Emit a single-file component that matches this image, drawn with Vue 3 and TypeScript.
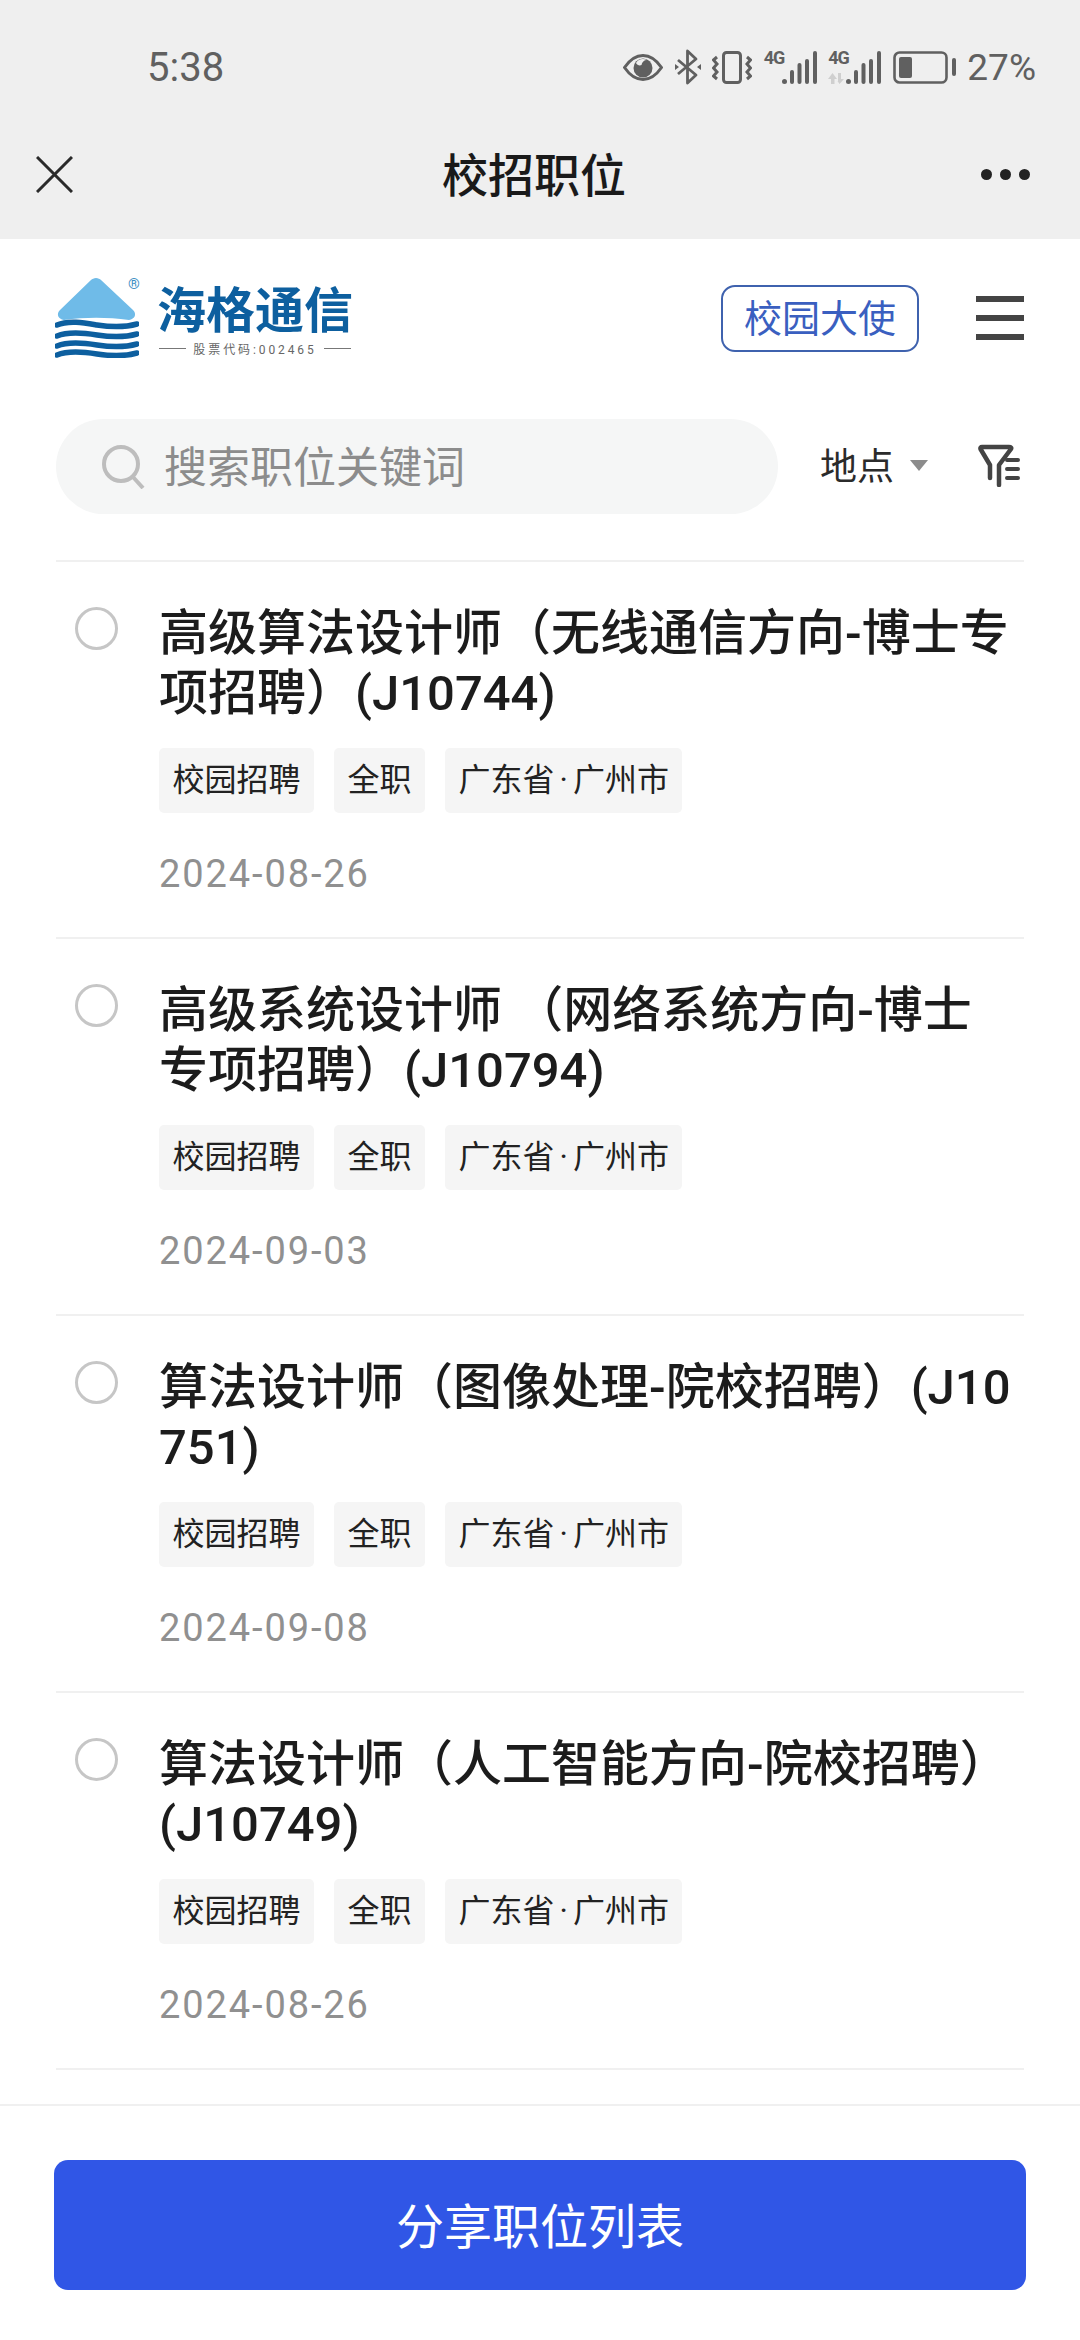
<template>
  <div class="page">
    <div class="top-bar">
      <div class="status-bar">
        <span class="clock">5:38</span>
        <div class="status-icons">
          <svg width="40" height="27" viewBox="0 0 40 27">
            <path d="M1.5 13.5 C8 4 14 1.5 20 1.5 C26 1.5 32 4 38.5 13.5 C32 23 26 25.5 20 25.5 C14 25.5 8 23 1.5 13.5 Z" fill="none" stroke="#606060" stroke-width="3" />
            <circle cx="20" cy="14" r="9.5" fill="#606060" />
            <path d="M13 9 C15 5 20 4 24 6 C21 6 19 8 18.5 11 C16.5 12 14 11 13 9 Z" fill="#efefef" />
          </svg>
          <svg width="26" height="36" viewBox="0 0 26 36">
            <path d="M3 11 L21 26 L12.5 34 L12.5 2 L21 10 L3 25" fill="none" stroke="#606060" stroke-width="2.8" stroke-linejoin="round" />
            <path d="M0 15 L4 18 L0 21 Z M26 15 L22 18 L26 21 Z" fill="#606060" />
          </svg>
          <svg width="40" height="33" viewBox="0 0 40 33">
            <rect x="11.5" y="1.5" width="17" height="30" rx="3" fill="none" stroke="#606060" stroke-width="3" />
            <path d="M5 6 L1.5 9 L5 13 L1.5 17 L5 21 L1.5 25 L5 28" fill="none" stroke="#606060" stroke-width="3" />
            <path d="M35 6 L38.5 9 L35 13 L38.5 17 L35 21 L38.5 25 L35 28" fill="none" stroke="#606060" stroke-width="3" />
          </svg>
          <div v-for="n in 2" :key="n" class="signal">
            <span class="net">4G</span>
            <svg v-if="n === 2" class="arrows" width="16" height="11" viewBox="0 0 16 11">
              <path d="M4.5 0 L9 6 H6.5 V11 H3 V6 H0 Z M10 0 H13 V6 H16 L11.5 11 L9.5 8 H10 Z" fill="#cfcfcf" />
            </svg>
            <svg width="35" height="33" viewBox="0 0 35 33">
              <circle cx="2.5" cy="30.5" r="2.5" fill="#606060" />
              <rect x="8" y="19" width="4" height="14" rx="2" fill="#606060" />
              <rect x="15.5" y="12" width="4" height="21" rx="2" fill="#606060" />
              <rect x="23" y="8" width="4" height="25" rx="2" fill="#606060" />
              <rect x="31" y="0" width="4" height="33" rx="2" fill="#606060" />
            </svg>
          </div>
          <svg width="63" height="33" viewBox="0 0 63 33">
            <rect x="1.5" y="1.5" width="52" height="30" rx="5" fill="none" stroke="#606060" stroke-width="2.6" />
            <rect x="6" y="6" width="13" height="21" rx="2" fill="#606060" />
            <rect x="59" y="7" width="4" height="18" rx="2" fill="#606060" />
          </svg>
          <span class="battery-text">27%</span>
        </div>
      </div>
      <div class="nav-bar">
        <svg width="37" height="37" viewBox="0 0 37 37">
          <path d="M1 1 L36 36 M36 1 L1 36" stroke="#2a2a2a" stroke-width="3" />
        </svg>
        <span class="nav-title">校招职位</span>
        <div class="more"><i></i><i></i><i></i></div>
      </div>
    </div>

    <main class="content">
      <header class="brand-row">
        <div class="logo">
          <svg width="84" height="80" viewBox="0 0 84 80">
            <path d="M41 0 C43 0 45 1 46 2 L78 32 C82 36 80 41 74 42 C52 39 30 39 9 42 C3 41 1 36 5 32 L36 2 C37 1 39 0 41 0 Z" fill="#6fbbe8" />
            <g fill="none" stroke="#0d5f9f" stroke-width="5.5" stroke-linecap="round">
              <path d="M2 47 C14 42 30 45 42 47 C55 49 68 50 82 46" />
              <path d="M2 58 C14 53 30 55 42 57 C55 59 68 60 82 56" />
              <path d="M2 68 C14 63 30 65 42 67 C55 69 68 70 82 66" />
              <path d="M2 77 C14 72 30 74 42 76 C55 78 68 79 82 75" />
            </g>
          </svg>
          <span class="reg">®</span>
          <div class="logo-text">
            <div class="logo-name">海格通信</div>
            <div class="logo-code"><i></i><span>股票代码:002465</span><i></i></div>
          </div>
        </div>
        <div class="brand-actions">
          <button class="ambassador">校园大使</button>
          <div class="menu"><i></i><i></i><i></i></div>
        </div>
      </header>

      <div class="search-row">
        <div class="search">
          <svg width="43" height="44" viewBox="0 0 43 44">
            <circle cx="19" cy="19" r="17" fill="none" stroke="#bdbdbd" stroke-width="4" />
            <path d="M31 32 L41 43" stroke="#bdbdbd" stroke-width="4" />
          </svg>
          <span class="search-text">搜索职位关键词</span>
        </div>
        <div class="place">地点<i class="caret"></i></div>
        <svg class="filter" width="42" height="43" viewBox="0 0 42 43">
          <path d="M12 34 V21 L2.5 5 Q2 3 4 3 H31 Q34 3 33 5 L21 21 V41" fill="none" stroke="#444" stroke-width="4.5" stroke-linejoin="round" stroke-linecap="round" />
          <path d="M29 16 H40 M29 25 H40 M29 34 H40" fill="none" stroke="#444" stroke-width="4" stroke-linecap="round" />
        </svg>
      </div>

      <ul class="jobs">
        <li v-for="job in jobs" :key="job.title" class="job">
          <span class="radio"></span>
          <div class="job-body">
            <div class="job-title">{{ job.title }}</div>
            <div class="tags">
              <span class="tag">校园招聘</span>
              <span class="tag">全职</span>
              <span class="tag">广东省<span class="dot">·</span>广州市</span>
            </div>
            <div class="job-date">{{ job.date }}</div>
          </div>
        </li>
      </ul>
    </main>

    <footer class="footer">
      <button class="share">分享职位列表</button>
    </footer>
  </div>
</template>

<script setup lang="ts">
interface Job {
  title: string;
  date: string;
}

const jobs: Job[] = [
  { title: "高级算法设计师（无线通信方向-博士专项招聘）(J10744)", date: "2024-08-26" },
  { title: "高级系统设计师 （网络系统方向-博士专项招聘）(J10794)", date: "2024-09-03" },
  { title: "算法设计师（图像处理-院校招聘）(J10751)", date: "2024-09-08" },
  { title: "算法设计师（人工智能方向-院校招聘）(J10749)", date: "2024-08-26" },
];
</script>

<style>
html,
body {
  margin: 0;
  background: #fff;
}
</style>

<style scoped>
.page {
  width: 1080px;
  height: 2340px;
  display: flex;
  flex-direction: column;
  overflow: hidden;
  background: #fff;
  font-family: Roboto, "Noto Sans CJK SC", sans-serif;
  color: #1c1c1c;
}

.top-bar {
  height: 239px;
  background: #efefef;
  flex-shrink: 0;
}

.status-bar {
  height: 110px;
  box-sizing: border-box;
  padding: 24px 44px 0 147px;
  display: flex;
  align-items: center;
  justify-content: space-between;
}

.clock {
  font-size: 40px;
  color: #606060;
}

.battery-text {
  font-size: 37px;
  color: #606060;
}

.status-icons {
  display: flex;
  align-items: center;
  gap: 11.5px;
}

.signal {
  position: relative;
  width: 53px;
  height: 33px;
  display: flex;
  justify-content: flex-end;
}

.net {
  position: absolute;
  left: 0;
  top: -4px;
  font-size: 18px;
  line-height: 22px;
  font-weight: 700;
  letter-spacing: -1px;
  color: #606060;
}

.arrows {
  position: absolute;
  left: 0;
  bottom: 0;
}

.nav-bar {
  height: 129px;
  padding: 0 50px 0 36px;
  display: flex;
  align-items: center;
  justify-content: space-between;
}

.nav-title {
  margin: 0 0 6px 14px;
  font-size: 46px;
  font-weight: 500;
  color: #1a1a1a;
}

.more {
  display: flex;
  gap: 8px;
}

.more i {
  width: 11px;
  height: 11px;
  border-radius: 50%;
  background: #222;
}

.content {
  flex: 1;
  min-height: 0;
  padding: 0 56px;
}

.brand-row {
  height: 158px;
  display: flex;
  align-items: center;
  justify-content: space-between;
}

.logo {
  position: relative;
  height: 80px;
  margin-left: -1px;
  display: flex;
  align-items: flex-start;
}

.reg {
  position: absolute;
  left: 73px;
  top: -2px;
  font-size: 15px;
  line-height: 16px;
  color: #3e8fc4;
}

.logo-text {
  width: 196px;
  margin: 3px 0 0 18px;
}

.logo-name {
  font-family: "Noto Sans CJK SC", sans-serif;
  font-size: 49px;
  font-weight: 700;
  line-height: 52px;
  color: #0d5f9f;
}

.logo-code {
  height: 27px;
  margin-top: 2px;
  padding: 0 2px;
  display: flex;
  align-items: center;
  gap: 7px;
  font-size: 12px;
  letter-spacing: 2.9px;
  color: #666;
  white-space: nowrap;
}

.logo-code i {
  flex: 1;
  height: 1px;
  background: #777;
}

.brand-actions {
  display: flex;
  align-items: center;
  gap: 57px;
}

.ambassador {
  width: 198px;
  height: 67px;
  padding: 0 0 5px;
  border: 2px solid #3f62ae;
  border-radius: 14px;
  background: #fff;
  font: 400 38px "Noto Sans CJK SC", sans-serif;
  color: #3a5fc0;
}

.menu {
  width: 48px;
  display: flex;
  flex-direction: column;
  gap: 13px;
}

.menu i {
  height: 6px;
  background: #444;
}

.search-row {
  margin-top: 22px;
  height: 95px;
  display: flex;
  align-items: center;
}

.search {
  width: 722px;
  height: 95px;
  box-sizing: border-box;
  padding-left: 46px;
  border-radius: 48px;
  background: #f5f6f6;
  display: flex;
  align-items: center;
  gap: 19px;
  font-size: 43px;
  color: #8c8c8c;
}

.search-text {
  margin-bottom: 5px;
}

.place {
  margin: 0 0 6px 42px;
  display: flex;
  align-items: center;
  font-size: 37px;
  color: #2b2b2b;
}

.caret {
  width: 0;
  height: 0;
  margin-left: 16px;
  margin-top: 4px;
  border-left: 9px solid transparent;
  border-right: 9px solid transparent;
  border-top: 11px solid #8c8c8c;
}

.filter {
  margin: 0 0 2px 50px;
}

.jobs {
  list-style: none;
  margin: 46px 0 0;
  padding: 0;
  border-top: 2px solid #f0f0f0;
}

.job {
  height: 375px;
  display: flex;
  border-bottom: 2px solid #f0f0f0;
}

.radio {
  width: 37px;
  height: 37px;
  margin: 45px 0 0 19px;
  border: 3px solid #c6c6c6;
  border-radius: 50%;
  flex-shrink: 0;
}

.job-body {
  flex: 1;
  margin-left: 41px;
  padding-right: 8px;
}

.job-title {
  margin-top: 42px;
  font-size: 49px;
  line-height: 60px;
  font-weight: 500;
  color: #1c1c1c;
  word-break: break-all;
}

.tags {
  margin-top: 24px;
  display: flex;
  gap: 20px;
}

.tag {
  height: 65px;
  padding: 0 13.5px;
  border-radius: 5px;
  background: #f5f5f5;
  font-size: 32px;
  line-height: 65px;
  color: #222;
}

.dot {
  padding: 0 5px;
}

.job-date {
  margin-top: 37px;
  font-size: 38px;
  line-height: 48px;
  letter-spacing: 1.9px;
  color: #909090;
}

.footer {
  height: 236px;
  flex-shrink: 0;
  box-sizing: border-box;
  padding: 54px 54px 0;
  border-top: 2px solid #f0f0f0;
}

.share {
  width: 100%;
  height: 130px;
  padding: 0 0 5px;
  border: 0;
  border-radius: 14px;
  background: #3056e6;
  font: 400 48px "Noto Sans CJK SC", sans-serif;
  color: #fff;
}
</style>
